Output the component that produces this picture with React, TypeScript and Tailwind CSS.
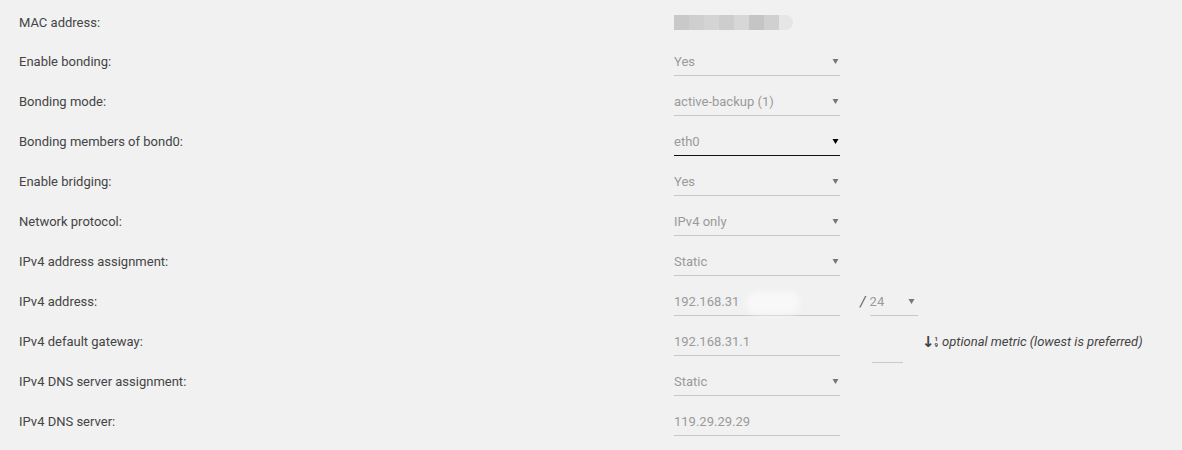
import React from "react";

const Arrow = ({ dark }: { dark?: boolean }) => (
  <svg width="7" height="7" viewBox="0 0 7 7" className="shrink-0">
    <path d="M0.5 1 H6.5 L3.5 6 Z" fill={dark ? "#000" : "#777"} />
  </svg>
);

const Select = ({ value, active, w = "w-[166px]" }: { value: string; active?: boolean; w?: string }) => (
  <div
    className={`${w} h-[28px] flex items-center justify-between pr-[1px] border-b ${
      active ? "border-[#111]" : "border-[#c9c9c9]"
    }`}
  >
    <span className="text-[#9a9a9a]">{value}</span>
    <Arrow dark={active} />
  </div>
);

const Input = ({ value, w = "w-[166px]" }: { value: string; w?: string }) => (
  <div className={`${w} h-[28px] flex items-center border-b border-[#c9c9c9]`}>
    <span className="text-[#9a9a9a]">{value}</span>
  </div>
);

const Row = ({ label, children }: { label: string; children: React.ReactNode }) => (
  <div className="flex items-center h-10">
    <div className="w-[655px] shrink-0 text-[#444]">{label}</div>
    <div className="flex items-center">{children}</div>
  </div>
);

const macBlocks = ["#c9c9c9", "#cfcfcf", "#d4d4d4", "#cdcdcd", "#d7d7d7", "#c5c5c5", "#d0d0d0"];

export default function App() {
  return (
    <div
      className="w-[1182px] h-[450px] bg-[#f1f1f1] pl-[19px] pt-[2px] text-[13px] overflow-hidden"
      style={{ fontFamily: "Roboto, 'Liberation Sans', sans-serif" }}
    >
      <div className="flex items-center h-10 pt-[2px]">
        <div className="w-[655px] shrink-0 text-[#444]">MAC address:</div>
        <div className="flex h-[15px] mt-[-2px]">
          {macBlocks.map((c, i) => (
            <div key={i} className="w-[15px] h-full" style={{ backgroundColor: c }} />
          ))}
          <div className="w-[14px] h-full bg-[#e6e6e6] rounded-r-full blur-[0.5px]" />
        </div>
      </div>
      <Row label="Enable bonding:">
        <Select value="Yes" />
      </Row>
      <Row label="Bonding mode:">
        <Select value="active-backup (1)" />
      </Row>
      <Row label="Bonding members of bond0:">
        <Select value="eth0" active />
      </Row>
      <Row label="Enable bridging:">
        <Select value="Yes" />
      </Row>
      <Row label="Network protocol:">
        <Select value="IPv4 only" />
      </Row>
      <Row label="IPv4 address assignment:">
        <Select value="Static" />
      </Row>
      <Row label="IPv4 address:">
        <div className="relative">
          <Input value="192.168.31" />
          <div className="absolute left-[72px] top-[4px] w-[54px] h-[22px] rounded-full bg-[#f8f8f8] blur-[3px]" />
        </div>
        <span className="ml-[20px] mr-[4px] italic text-[#555] text-[14px]">/</span>
        <div className="w-[48px] h-[28px] flex items-center justify-between border-b border-[#c9c9c9] pr-[3px]">
          <span className="text-[#9a9a9a]">24</span>
          <Arrow />
        </div>
      </Row>
      <Row label="IPv4 default gateway:">
        <Input value="192.168.31.1" />
        <div className="ml-[32px] w-[31px] h-[28px] border-b border-[#c9c9c9] mt-[14px] self-start" />
        <div className="ml-[19px] flex items-center text-[#444]">
          <span
            className="text-[15px] leading-none font-bold"
            style={{ fontFamily: "'DejaVu Sans', sans-serif" }}
          >
            ↓
          </span>
          <span className="flex flex-col text-[6px] leading-[6px] font-bold">
            <span>1</span>
            <span>9</span>
          </span>
          <span className="ml-[4px] italic">optional metric (lowest is preferred)</span>
        </div>
      </Row>
      <Row label="IPv4 DNS server assignment:">
        <Select value="Static" />
      </Row>
      <Row label="IPv4 DNS server:">
        <Input value="119.29.29.29" />
      </Row>
    </div>
  );
}
